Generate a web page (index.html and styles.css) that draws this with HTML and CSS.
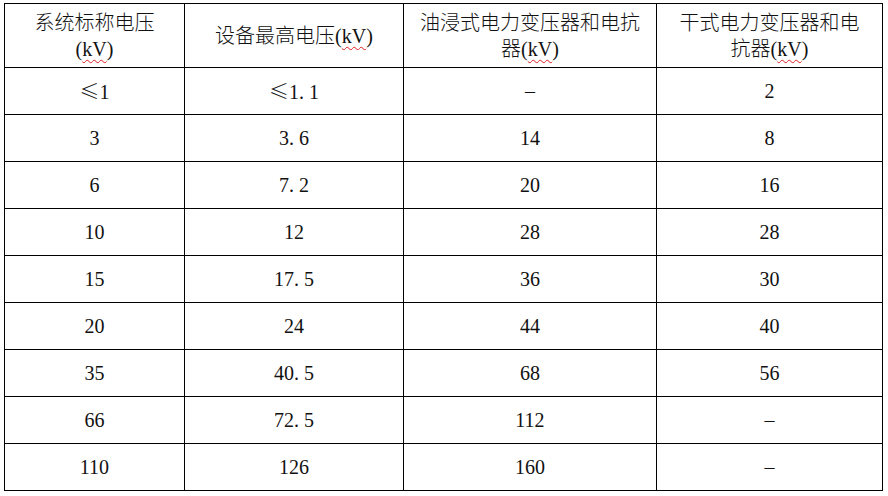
FILE: index.html
```html
<!DOCTYPE html>
<html lang="zh-CN">
<head>
<meta charset="utf-8">
<title>电压等级表</title>
<link rel="stylesheet" href="styles.css">
</head>
<body>
<table class="volt-table">
  <colgroup>
    <col class="c1"><col class="c2"><col class="c3"><col class="c4">
  </colgroup>
  <thead>
    <tr class="head">
      <th>系统标称电压<br>(<span class="spell">kV</span>)</th>
      <th>设备最高电压(<span class="spell">kV</span>)</th>
      <th>油浸式电力变压器和电抗<br>器(<span class="spell">kV</span>)</th>
      <th>干式电力变压器和电<br>抗器(<span class="spell">kV</span>)</th>
    </tr>
  </thead>
  <tbody>
    <tr><td><span class="sym">≤</span>1</td><td><span class="sym">≤</span>1<span class="pt">.</span>1</td><td>–</td><td>2</td></tr>
    <tr><td>3</td><td>3<span class="pt">.</span>6</td><td>14</td><td>8</td></tr>
    <tr><td>6</td><td>7<span class="pt">.</span>2</td><td>20</td><td>16</td></tr>
    <tr><td>10</td><td>12</td><td>28</td><td>28</td></tr>
    <tr><td>15</td><td>17<span class="pt">.</span>5</td><td>36</td><td>30</td></tr>
    <tr><td>20</td><td>24</td><td>44</td><td>40</td></tr>
    <tr><td>35</td><td>40<span class="pt">.</span>5</td><td>68</td><td>56</td></tr>
    <tr><td>66</td><td>72<span class="pt">.</span>5</td><td>112</td><td>–</td></tr>
    <tr><td>110</td><td>126</td><td>160</td><td>–</td></tr>
  </tbody>
</table>
</body>
</html>
```
FILE: styles.css
```css
html, body {
  margin: 0;
  padding: 0;
  background: #fff;
}

body {
  font-family: "Liberation Serif", "Noto Sans CJK SC", serif;
  font-size: 20px;
  color: #111;
}

.volt-table {
  margin: 3px 0 0 4px;
  border-collapse: collapse;
  table-layout: fixed;
  width: 878px;
}

.c1 { width: 180px; }
.c2 { width: 219px; }
.c3 { width: 253px; }
.c4 { width: 226px; }

.volt-table th,
.volt-table td {
  border: 1px solid #000;
  padding: 0 4px;
  text-align: center;
  vertical-align: middle;
  font-weight: 300;
  line-height: 26px;
}

.volt-table tr.head {
  height: 64px;
}

.volt-table tbody tr {
  height: 47px;
}

.sym {
  font-family: "Noto Sans CJK SC", sans-serif;
  font-weight: 300;
}

.pt {
  display: inline-block;
  width: 10px;
  text-align: left;
}

.spell {
  text-decoration-line: underline;
  text-decoration-style: wavy;
  text-decoration-color: #e02020;
  text-decoration-thickness: 1px;
  text-underline-offset: 3px;
}
```
